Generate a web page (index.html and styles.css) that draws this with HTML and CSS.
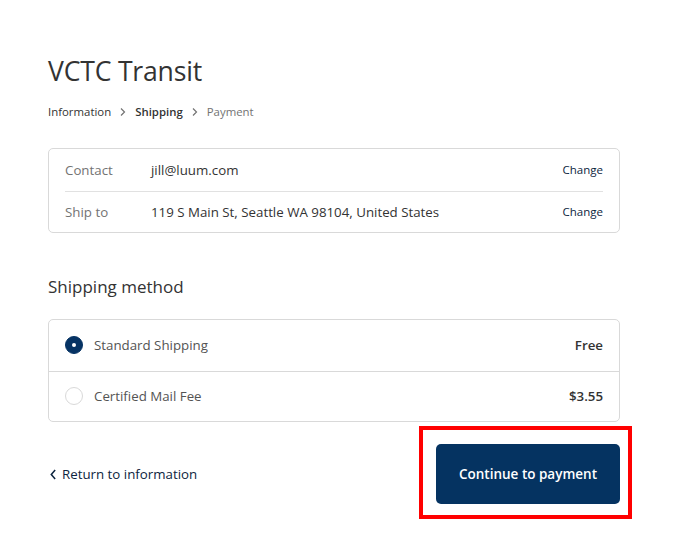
FILE: index.html
```html
<!DOCTYPE html>
<html lang="en">
<head>
<meta charset="utf-8">
<title>VCTC Transit - Shipping</title>
<link rel="stylesheet" href="styles.css">
</head>
<body>
<main class="checkout">
  <h1 class="shop-title">VCTC Transit</h1>
  <nav class="breadcrumb">
    <span class="crumb">Information</span>
    <svg class="crumb-sep" viewBox="0 0 10 10"><path d="M3 1.5 L6.5 5 L3 8.5" fill="none" stroke="currentColor" stroke-width="1.2"/></svg>
    <span class="crumb crumb-current">Shipping</span>
    <svg class="crumb-sep" viewBox="0 0 10 10"><path d="M3 1.5 L6.5 5 L3 8.5" fill="none" stroke="currentColor" stroke-width="1.2"/></svg>
    <span class="crumb crumb-muted">Payment</span>
  </nav>

  <section class="review">
    <div class="review-row">
      <span class="review-label">Contact</span>
      <span class="review-value">jill@luum.com</span>
      <a class="review-link" href="#">Change</a>
    </div>
    <div class="review-row">
      <span class="review-label">Ship to</span>
      <span class="review-value">119 S Main St, Seattle WA 98104, United States</span>
      <a class="review-link" href="#">Change</a>
    </div>
  </section>

  <h2 class="section-title">Shipping method</h2>
  <section class="methods">
    <label class="method">
      <span class="radio radio-checked"></span>
      <span class="method-name">Standard Shipping</span>
      <span class="method-price">Free</span>
    </label>
    <label class="method">
      <span class="radio"></span>
      <span class="method-name">Certified Mail Fee</span>
      <span class="method-price">$3.55</span>
    </label>
  </section>

  <div class="actions">
    <a class="back-link" href="#">
      <svg class="back-icon" viewBox="0 0 10 10"><path d="M6.5 1 L3 5 L6.5 9" fill="none" stroke="currentColor" stroke-width="1.4"/></svg>
      Return to information
    </a>
    <div class="highlight">
      <button class="continue">Continue to payment</button>
    </div>
  </div>
</main>
</body>
</html>
```

FILE: styles.css
```css
* { box-sizing: border-box; }
html, body { margin: 0; padding: 0; background: #fff; }
body {
  font-family: "Open Sans", "Noto Sans", "Liberation Sans", sans-serif;
  color: #333;
  font-size: 13.3px;
  min-height: 558px;
}
.checkout {
  width: 572px;
  margin-left: 48px;
  padding-top: 52px;
  padding-bottom: 40px;
}
.shop-title {
  margin: 0;
  font-weight: 400;
  font-size: 26.6px;
  line-height: 38px;
  color: #333;
  letter-spacing: -0.2px;
}
.breadcrumb {
  display: flex;
  align-items: center;
  gap: 5px;
  margin-top: 12px;
  font-size: 11.4px;
  line-height: 20px;
}
.crumb { color: #333; }
.crumb-current { font-weight: 600; }
.crumb-muted { color: #737373; }
.crumb-sep { width: 10px; height: 10px; color: #737373; margin: 0 2px; }

.review {
  margin-top: 26px;
  border: 1px solid #d9d9d9;
  border-radius: 5px;
  padding: 0 16px;
}
.review-row {
  display: flex;
  align-items: center;
  height: 41.5px;
}
.review-row + .review-row { border-top: 1px solid #e1e1e1; }
.review-label { width: 86px; color: #737373; }
.review-value { flex: 1; color: #333; }
.review-link { color: #0d2540; text-decoration: none; font-size: 11.5px; }

.section-title {
  margin: 40px 0 0;
  font-weight: 400;
  font-size: 17px;
  line-height: 28px;
  color: #333;
}
.methods {
  margin-top: 18px;
  border: 1px solid #d9d9d9;
  border-radius: 5px;
}
.method {
  display: flex;
  align-items: center;
  height: 50.5px;
  padding: 0 16px;
}
.method + .method { border-top: 1px solid #d9d9d9; }
.radio {
  width: 18px;
  height: 18px;
  border-radius: 50%;
  border: 1px solid #d9d9d9;
  margin-right: 11px;
  flex: none;
  display: flex;
  align-items: center;
  justify-content: center;
}
.radio-checked {
  background: #063364;
  border-color: #063364;
}
.radio-checked::after {
  content: "";
  width: 4px;
  height: 4px;
  border-radius: 50%;
  background: #fff;
}
.method-name { flex: 1; color: #545454; }
.method-price { font-weight: 600; color: #333; }

.actions {
  display: flex;
  align-items: center;
  justify-content: space-between;
  margin-top: 22px;
}
.back-link {
  display: flex;
  align-items: center;
  gap: 3px;
  color: #0d2540;
  text-decoration: none;
}
.back-icon { width: 11px; height: 11px; }
.highlight {
  position: relative;
}
.highlight::after {
  content: "";
  position: absolute;
  left: -17px;
  top: -18px;
  right: -12px;
  bottom: -15px;
  border: 4px solid #ff0000;
  pointer-events: none;
}
.continue {
  display: block;
  width: 184px;
  height: 60px;
  border: none;
  border-radius: 5px;
  background: #053361;
  color: #fff;
  font-family: inherit;
  font-size: 13.5px;
  font-weight: 600;
}
```
